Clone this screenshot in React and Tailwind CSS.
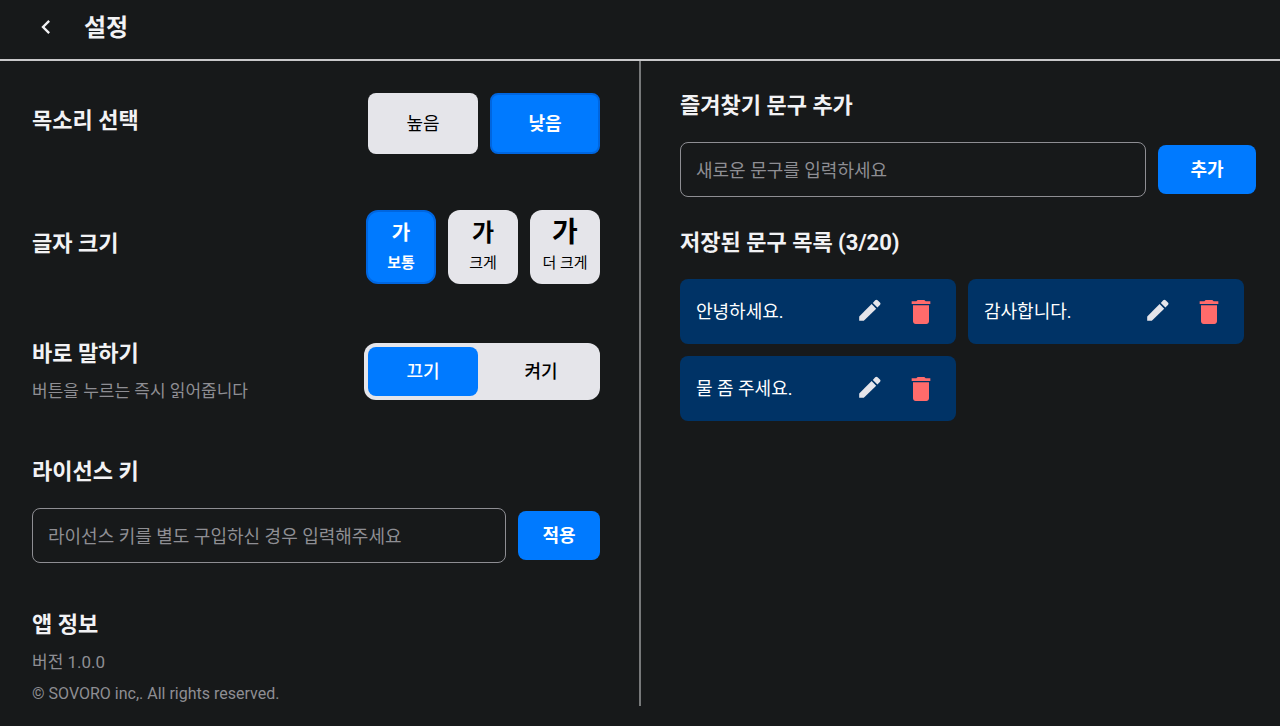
import { useState } from "react";
import { MdChevronLeft, MdDelete } from "react-icons/md";

const VOICES = ["높음", "낮음"];

const FONT_SIZES = [
  { label: "보통", sample: "text-[20px]" },
  { label: "크게", sample: "text-[24px]" },
  { label: "더 크게", sample: "text-[28px]" },
];

const MAX_PHRASES = 20;

function Heading({ children }) {
  return <h2 className="text-[22px] leading-[26px] font-bold text-[#f2f2f4]">{children}</h2>;
}

function PencilIcon() {
  return (
    <svg width="22" height="22" viewBox="0 0 22 22" fill="currentColor">
      <path d="M0.2 21.8v-4.3L12.6 5.1l4.6 4.6L4.8 21.8z" />
      <path d="M13.8 3.9l2.4-2.6q1.2-1.2 2.4 0l2.3 2.3q1.2 1.2 0 2.4l-2.5 2.5z" />
    </svg>
  );
}

function TextField({ id, label, placeholder, value, onChange }) {
  return (
    <input
      id={id}
      type="text"
      aria-label={label}
      placeholder={placeholder}
      value={value}
      onChange={(e) => onChange(e.target.value)}
      className="h-[55px] min-w-0 flex-1 rounded-lg border border-[#8e8e93] bg-transparent px-[15px] pt-0.5 text-[18px] text-white placeholder:text-[#8e8e93] focus:outline-none"
    />
  );
}

function PhraseCard({ text, onDelete }) {
  return (
    <li className="flex h-[65px] items-center rounded-lg bg-[#003366] pr-[19px] pl-4">
      <span className="flex-1 text-[18px] text-white">{text}</span>
      <button type="button" aria-label="수정" className="mr-6 pb-1 text-[#e5e5ea]">
        <PencilIcon />
      </button>
      <button type="button" aria-label="삭제" className="text-[#ff6b6b]" onClick={onDelete}>
        <MdDelete size={32} />
      </button>
    </li>
  );
}

function App() {
  const [voice, setVoice] = useState("낮음");
  const [fontSize, setFontSize] = useState("보통");
  const [instant, setInstant] = useState(false);
  const [license, setLicense] = useState("");
  const [phrase, setPhrase] = useState("");
  const [phrases, setPhrases] = useState(["안녕하세요.", "감사합니다.", "물 좀 주세요."]);

  const addPhrase = () => {
    if (!phrase.trim() || phrases.length >= MAX_PHRASES) return;
    setPhrases([...phrases, phrase.trim()]);
    setPhrase("");
  };

  const removePhrase = (index) => {
    setPhrases(phrases.filter((_, i) => i !== index));
  };

  return (
    <div className="flex min-h-screen flex-col bg-[#17191a] pb-5 font-[Roboto,'Noto_Sans_CJK_KR',sans-serif] text-[#f2f2f4]">
      <header className="flex h-[61px] items-center border-b-2 border-[#c8c8ca] pb-1 pl-8">
        <button type="button" aria-label="뒤로" className="pb-0.5">
          <MdChevronLeft size={28} />
        </button>
        <h1 className="ml-6 text-[24px] font-bold">설정</h1>
      </header>

      <main className="grid flex-1 grid-cols-2">
        {/* 왼쪽: 앱 설정 */}
        <div className="flex flex-col pt-8 pr-10 pl-8">
          <section className="flex items-center justify-between">
            <div className="pb-1.5">
              <Heading>목소리 선택</Heading>
            </div>
            <div className="flex gap-3">
              {VOICES.map((v) => (
                <button
                  key={v}
                  type="button"
                  onClick={() => setVoice(v)}
                  className={`h-[61px] w-[110px] rounded-lg text-[18px] ${voice === v ? "border-2 border-[#0066e0] bg-[#007aff] font-bold text-white" : "bg-[#e5e5ea] text-black"}`}
                >
                  {v}
                </button>
              ))}
            </div>
          </section>

          <section className="mt-14 flex items-center justify-between">
            <div className="pb-1.5">
              <Heading>글자 크기</Heading>
            </div>
            <div className="flex gap-3">
              {FONT_SIZES.map((size) => (
                <button
                  key={size.label}
                  type="button"
                  onClick={() => setFontSize(size.label)}
                  className={`flex h-[74px] w-[70px] flex-col items-center justify-center rounded-xl ${fontSize === size.label ? "border-2 border-[#0066e0] bg-[#007aff] font-bold text-white" : "bg-[#e5e5ea] text-black"}`}
                >
                  <span className={`leading-8 font-bold ${size.sample}`}>가</span>
                  <span className="text-[15px] leading-7">{size.label}</span>
                </button>
              ))}
            </div>
          </section>

          <section className="mt-14 flex items-center justify-between">
            <div className="pt-px">
              <Heading>바로 말하기</Heading>
              <p className="mt-3 text-[17px] leading-6 text-[#8e8e93]">버튼을 누르는 즉시 읽어줍니다</p>
            </div>
            <div className="flex gap-2 rounded-xl bg-[#e5e5ea] p-1">
              <button
                type="button"
                onClick={() => setInstant(false)}
                className={`h-[49px] w-[110px] rounded-lg text-[18px] font-medium ${instant ? "text-black" : "bg-[#007aff] text-white"}`}
              >
                끄기
              </button>
              <button
                type="button"
                onClick={() => setInstant(true)}
                className={`h-[49px] w-[110px] rounded-lg text-[18px] font-medium ${instant ? "bg-[#007aff] text-white" : "text-black"}`}
              >
                켜기
              </button>
            </div>
          </section>

          <section className="mt-14">
            <Heading>라이선스 키</Heading>
            <div className="mt-[23px] flex items-center gap-3">
              <TextField
                id="license"
                label="라이선스 키"
                placeholder="라이선스 키를 별도 구입하신 경우 입력해주세요"
                value={license}
                onChange={setLicense}
              />
              <button type="button" className="h-[49px] w-[82px] rounded-lg bg-[#007aff] text-[18px] font-bold text-white">
                적용
              </button>
            </div>
          </section>

          <section className="mt-12 pt-px">
            <Heading>앱 정보</Heading>
            <p className="mt-3 text-[17px] leading-6 text-[#8e8e93]">버전 1.0.0</p>
            <p className="mt-2 text-[16px] leading-6 text-[#8e8e93]">© SOVORO inc,. All rights reserved.</p>
          </section>
        </div>

        {/* 오른쪽: 즐겨찾기 문구 */}
        <div className="-ml-px border-l-2 border-[#77797a] pt-8 pr-6 pl-[39px]">
          <Heading>즐겨찾기 문구 추가</Heading>
          <div className="mt-[23px] flex items-center gap-3">
            <TextField
              id="phrase"
              label="새로운 문구"
              placeholder="새로운 문구를 입력하세요"
              value={phrase}
              onChange={setPhrase}
            />
            <button
              type="button"
              onClick={addPhrase}
              className="h-[49px] w-[98px] rounded-lg bg-[#007aff] text-[18px] font-bold text-white"
            >
              추가
            </button>
          </div>

          <div className="mt-8 pt-px">
            <Heading>
              저장된 문구 목록 ({phrases.length}/{MAX_PHRASES})
            </Heading>
          </div>
          <ul className="mt-[23px] grid grid-cols-2 gap-3 pr-3">
            {phrases.map((text, i) => (
              <PhraseCard key={i} text={text} onDelete={() => removePhrase(i)} />
            ))}
          </ul>
        </div>
      </main>
    </div>
  );
}

export default App;
